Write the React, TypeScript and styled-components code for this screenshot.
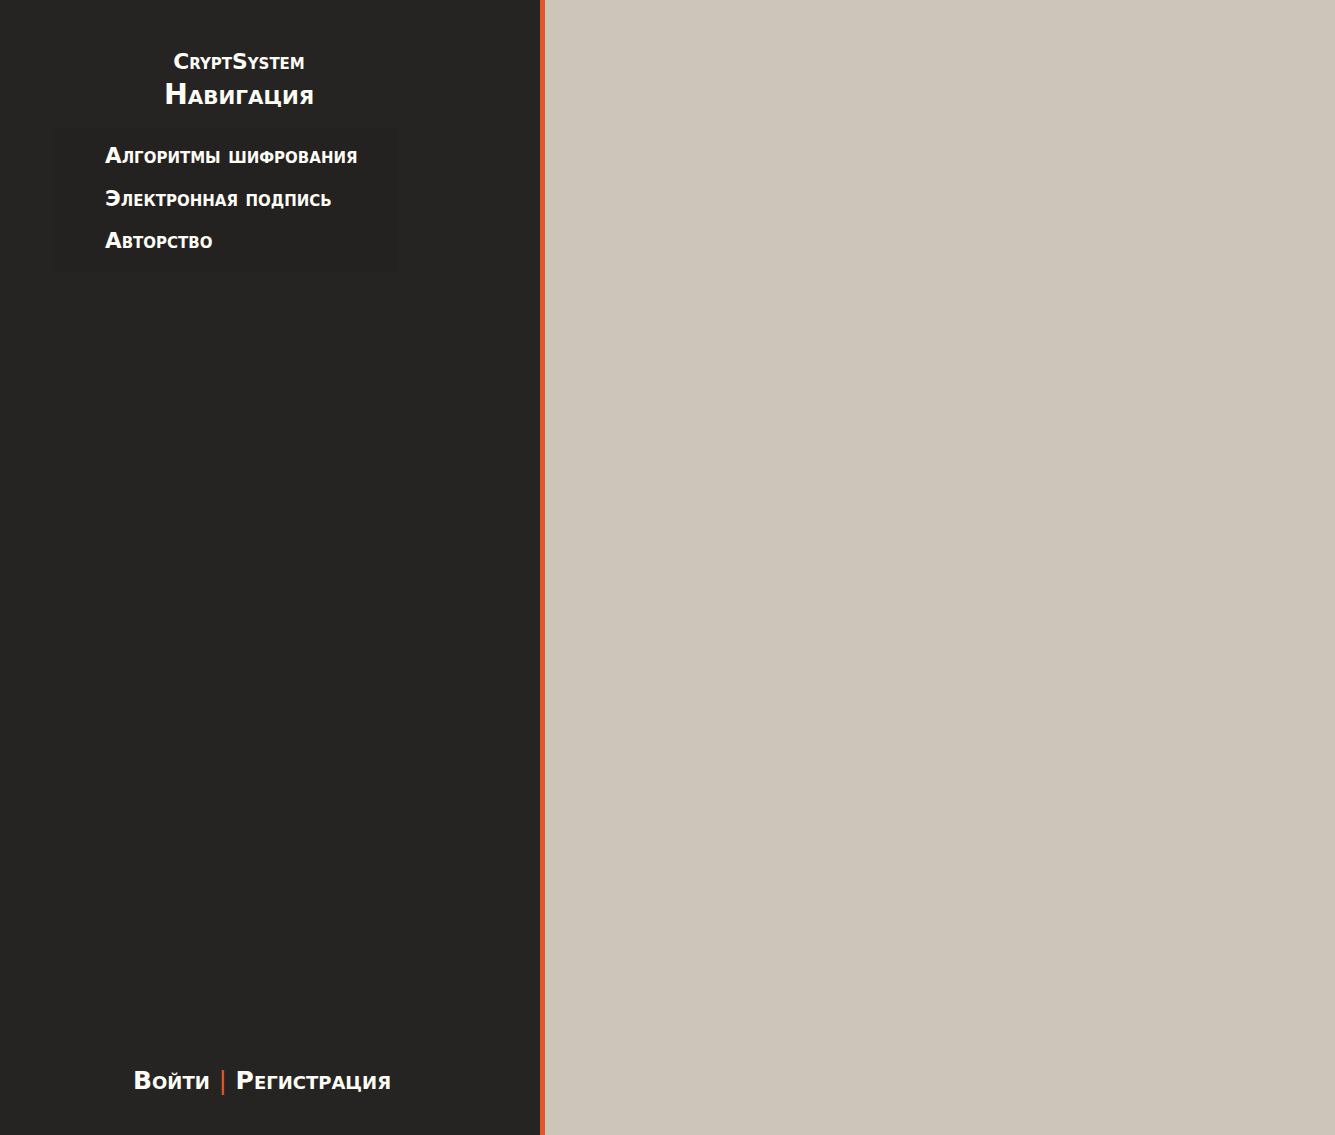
import React from "react";
import styled, { createGlobalStyle } from "styled-components";

const Global = createGlobalStyle`
  html, body { margin: 0; padding: 0; height: 100%; }
  body { background: #cec5ba; font-family: "DejaVu Sans", Verdana, sans-serif; }
  #root { height: 100%; }
`;

const Layout = styled.div`
  display: flex;
  height: 1135px;
`;

const Sidebar = styled.aside`
  width: 540px;
  flex: none;
  background: #262423;
  border-right: 5px solid #e0582a;
  display: flex;
  flex-direction: column;
  color: #fdfcf5;
  font-weight: bold;
  font-variant: small-caps;
`;

const Header = styled.header`
  width: 478px;
  padding-top: 48px;
  text-align: center;
`;

const Brand = styled.div`
  font-size: 21.8px;
  line-height: 28px;
`;

const Title = styled.h1`
  margin: 0;
  font-size: 28.5px;
  line-height: 38px;
  font-weight: bold;
`;

const NavBox = styled.nav`
  margin: 14px 0 0 52px;
  width: 293px;
  padding: 7px 0 9px 53px;
  background: #242221;
  display: flex;
  flex-direction: column;
`;

const NavItem = styled.a`
  color: #fdfcf5;
  text-decoration: none;
  font-size: 21.5px;
  line-height: 42.5px;
  white-space: nowrap;
`;

const Footer = styled.footer`
  margin-top: auto;
  padding: 0 0 36px 133px;
  font-size: 25px;
  line-height: 36px;
`;

const Sep = styled.span`
  color: #e0582a;
  font-weight: normal;
`;

const Main = styled.main`
  flex: 1;
  background: #cec5ba;
`;

export default function App() {
  return (
    <>
      <Global />
      <Layout>
        <Sidebar>
          <Header>
            <Brand>CryptSystem</Brand>
            <Title>Навигация</Title>
          </Header>
          <NavBox>
            <NavItem href="#">Алгоритмы шифрования</NavItem>
            <NavItem href="#">Электронная подпись</NavItem>
            <NavItem href="#">Авторство</NavItem>
          </NavBox>
          <Footer>
            Войти <Sep>|</Sep> Регистрация
          </Footer>
        </Sidebar>
        <Main />
      </Layout>
    </>
  );
}
